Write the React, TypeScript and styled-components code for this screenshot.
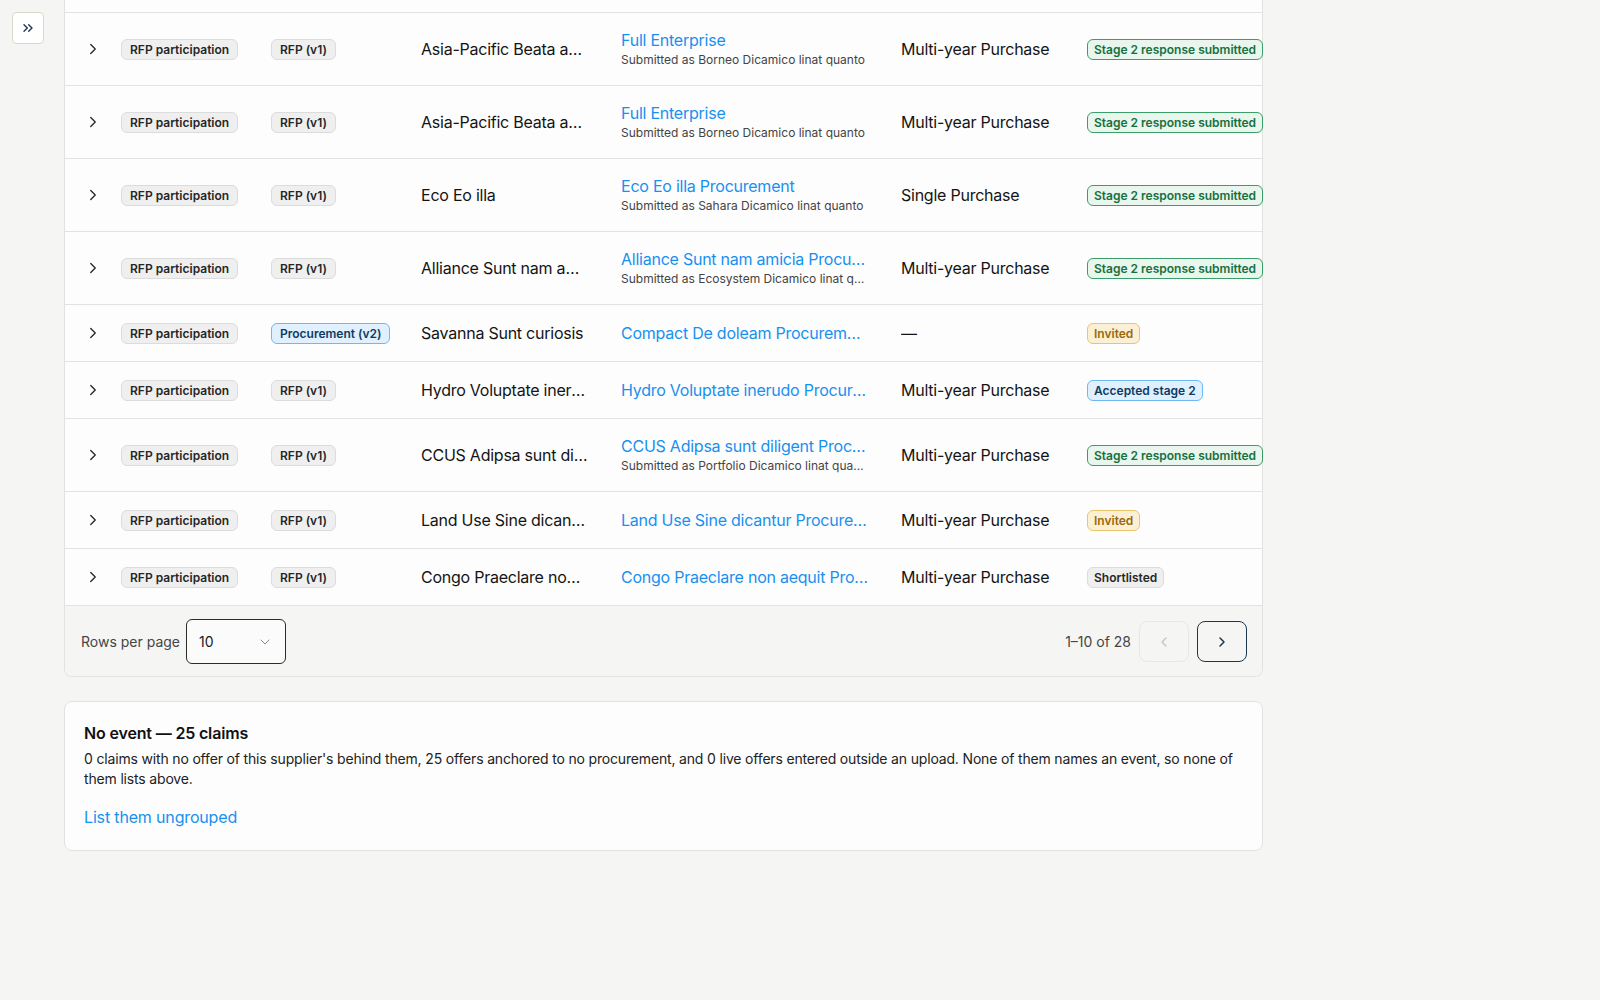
import React from "react";
import styled, { createGlobalStyle, css } from "styled-components";
import { ChevronRight, ChevronsRight, ChevronLeft, ChevronDown } from "lucide-react";

const GlobalStyle = createGlobalStyle`
  html, body { margin: 0; padding: 0; background: #f5f5f3; }
  body {
    font-family: Inter, "Noto Sans", "Liberation Sans", sans-serif;
    color: #151515;
    -webkit-font-smoothing: antialiased;
  }
  #root { min-height: 100vh; }
  * { box-sizing: border-box; }
`;

const Page = styled.div`
  display: flex;
  align-items: flex-start;
  min-height: 100vh;
`;

const Sidebar = styled.aside`
  width: 64px;
  flex: none;
  padding: 12px;
`;

const ToggleButton = styled.button`
  width: 32px;
  height: 32px;
  display: flex;
  align-items: center;
  justify-content: center;
  padding: 0;
  background: #fff;
  border: 1px solid #d9dacb;
  border-radius: 4px;
  color: #1c3550;
  cursor: pointer;
`;

const Main = styled.main`
  width: 1199px;
  flex: none;
  display: flex;
  flex-direction: column;
  gap: 24px;
`;

const TableCard = styled.section`
  background: #fdfdfd;
  border: 1px solid #e2e2e0;
  border-top: none;
  border-radius: 0 0 8px 8px;
`;

const Sliver = styled.div`
  height: 13px;
  border-bottom: 1px solid #e2e2e0;
`;

const Row = styled.div<{ $tall?: boolean }>`
  display: grid;
  grid-template-columns: 56px 150px 150px 200px 280px 186px 1fr;
  align-items: center;
  border-bottom: 1px solid #e2e2e0;
  height: ${(p) => (p.$tall ? "73px" : "57px")};
`;

const Cell = styled.div`
  min-width: 0;
  padding-right: 32px;
  font-size: 16px;
  line-height: 21px;
  letter-spacing: -0.015em;
  color: #141414;
`;

const ExpandCell = styled.div`
  display: flex;
  align-items: center;
  padding-left: 19px;
  color: #2a2a2a;
`;

const Truncate = styled.div`
  white-space: nowrap;
  overflow: hidden;
  text-overflow: ellipsis;
`;

const LinkTitle = styled(Truncate)`
  color: #1890f0;
  font-size: 16px;
  line-height: 21px;
`;

const SubText = styled(Truncate)`
  color: #444;
  font-size: 12px;
  line-height: 17px;
  letter-spacing: 0;
`;

const StatusCell = styled.div`
  white-space: nowrap;
`;

type Tone = "grey" | "blue" | "green" | "amber";

const tones: Record<Tone, ReturnType<typeof css>> = {
  grey: css`
    background: #efefef;
    border-color: #dcdcdc;
    color: #262626;
  `,
  blue: css`
    background: #e0f0fe;
    border-color: #6db9f2;
    color: #0f3b63;
  `,
  green: css`
    background: #e8f6ee;
    border-color: #3a9e68;
    color: #17703e;
  `,
  amber: css`
    background: #fcf0d4;
    border-color: #e9c56c;
    color: #98690e;
  `,
};

const Badge = styled.span<{ $tone: Tone }>`
  display: inline-block;
  font-size: 12px;
  line-height: 17px;
  font-weight: 600;
  letter-spacing: 0;
  padding: 1px 8px;
  border: 1px solid;
  border-radius: 6px;
  white-space: nowrap;
  ${(p) => tones[p.$tone]}
`;

const StatusBadge = styled(Badge)`
  padding: 1px 6px;
`;

const Footer = styled.div`
  display: flex;
  align-items: center;
  justify-content: space-between;
  padding: 13px 15px 12px 16px;
  background: #f5f5f4;
  border-radius: 0 0 8px 8px;
`;

const FooterGroup = styled.div`
  display: flex;
  align-items: center;
  gap: 8px;
  font-size: 14px;
  color: #454545;
`;

const RowsLabel = styled.span`
  margin-right: -2px;
`;

const Select = styled.div`
  width: 100px;
  height: 45px;
  display: flex;
  align-items: center;
  justify-content: space-between;
  padding: 0 12px 0 12px;
  background: #fbfbfb;
  border: 1px solid #2b2b2b;
  border-radius: 6px;
  font-size: 14px;
  color: #1a1a1a;
`;

const PageButton = styled.button<{ $active?: boolean }>`
  width: 50px;
  height: 41px;
  display: flex;
  align-items: center;
  justify-content: center;
  padding: 0;
  background: transparent;
  border-radius: 8px;
  border: 1px solid ${(p) => (p.$active ? "#1c3550" : "#e6e7e6")};
  color: ${(p) => (p.$active ? "#1c3550" : "#b9c2cb")};
  cursor: ${(p) => (p.$active ? "pointer" : "default")};
`;

const NoteCard = styled.section`
  background: #fdfdfd;
  border: 1px solid #e2e2e0;
  border-radius: 8px;
  padding: 20px 19px 23px 19px;
`;

const NoteTitle = styled.h3`
  margin: 0;
  font-size: 16px;
  line-height: 22px;
  font-weight: 600;
  letter-spacing: -0.01em;
  color: #111;
`;

const NoteText = styled.p`
  margin: 5px 0 0;
  font-size: 14px;
  line-height: 20px;
  letter-spacing: -0.012em;
  color: #222;
`;

const NoteLink = styled.a`
  display: block;
  margin-top: 18px;
  font-size: 16px;
  line-height: 20px;
  letter-spacing: -0.01em;
  color: #1890f0;
  text-decoration: none;
  cursor: pointer;
`;

type RowData = {
  version: string;
  versionTone: Tone;
  name: string;
  title: string;
  sub?: string;
  purchase: string;
  status: string;
  statusTone: Tone;
};

const rows: RowData[] = [
  {
    version: "RFP (v1)",
    versionTone: "grey",
    name: "Asia-Pacific Beata amicia",
    title: "Full Enterprise",
    sub: "Submitted as Borneo Dicamico linat quanto",
    purchase: "Multi-year Purchase",
    status: "Stage 2 response submitted",
    statusTone: "green",
  },
  {
    version: "RFP (v1)",
    versionTone: "grey",
    name: "Asia-Pacific Beata amicia",
    title: "Full Enterprise",
    sub: "Submitted as Borneo Dicamico linat quanto",
    purchase: "Multi-year Purchase",
    status: "Stage 2 response submitted",
    statusTone: "green",
  },
  {
    version: "RFP (v1)",
    versionTone: "grey",
    name: "Eco Eo illa",
    title: "Eco Eo illa Procurement",
    sub: "Submitted as Sahara Dicamico linat quanto",
    purchase: "Single Purchase",
    status: "Stage 2 response submitted",
    statusTone: "green",
  },
  {
    version: "RFP (v1)",
    versionTone: "grey",
    name: "Alliance Sunt nam amicia",
    title: "Alliance Sunt nam amicia Procurement",
    sub: "Submitted as Ecosystem Dicamico linat quanto",
    purchase: "Multi-year Purchase",
    status: "Stage 2 response submitted",
    statusTone: "green",
  },
  {
    version: "Procurement (v2)",
    versionTone: "blue",
    name: "Savanna Sunt curiosis",
    title: "Compact De doleam Procurement",
    purchase: "—",
    status: "Invited",
    statusTone: "amber",
  },
  {
    version: "RFP (v1)",
    versionTone: "grey",
    name: "Hydro Voluptate inerudo",
    title: "Hydro Voluptate inerudo Procurement",
    purchase: "Multi-year Purchase",
    status: "Accepted stage 2",
    statusTone: "blue",
  },
  {
    version: "RFP (v1)",
    versionTone: "grey",
    name: "CCUS Adipsa sunt diligent",
    title: "CCUS Adipsa sunt diligent Procurement",
    sub: "Submitted as Portfolio Dicamico linat quanto",
    purchase: "Multi-year Purchase",
    status: "Stage 2 response submitted",
    statusTone: "green",
  },
  {
    version: "RFP (v1)",
    versionTone: "grey",
    name: "Land Use Sine dicantur",
    title: "Land Use Sine dicantur Procurement",
    purchase: "Multi-year Purchase",
    status: "Invited",
    statusTone: "amber",
  },
  {
    version: "RFP (v1)",
    versionTone: "grey",
    name: "Congo Praeclare non aequit",
    title: "Congo Praeclare non aequit Procurement",
    purchase: "Multi-year Purchase",
    status: "Shortlisted",
    statusTone: "grey",
  },
];

export default function App() {
  return (
    <>
      <GlobalStyle />
      <Page>
        <Sidebar>
          <ToggleButton aria-label="Expand sidebar">
            <ChevronsRight size={16} strokeWidth={2} />
          </ToggleButton>
        </Sidebar>
        <Main>
          <TableCard>
            <Sliver />
            {rows.map((r, i) => (
              <Row key={i} $tall={!!r.sub}>
                <ExpandCell>
                  <ChevronRight size={18} strokeWidth={1.8} />
                </ExpandCell>
                <Cell>
                  <Badge $tone="grey">RFP participation</Badge>
                </Cell>
                <Cell>
                  <Badge $tone={r.versionTone}>{r.version}</Badge>
                </Cell>
                <Cell>
                  <Truncate>{r.name}</Truncate>
                </Cell>
                <Cell>
                  <LinkTitle>{r.title}</LinkTitle>
                  {r.sub && <SubText>{r.sub}</SubText>}
                </Cell>
                <Cell>
                  <Truncate>{r.purchase}</Truncate>
                </Cell>
                <StatusCell>
                  <StatusBadge $tone={r.statusTone}>{r.status}</StatusBadge>
                </StatusCell>
              </Row>
            ))}
            <Footer>
              <FooterGroup>
                <RowsLabel>Rows per page</RowsLabel>
                <Select>
                  <span>10</span>
                  <ChevronDown size={16} color="#8a8a8a" strokeWidth={1.5} />
                </Select>
              </FooterGroup>
              <FooterGroup>
                <span>1–10 of 28</span>
                <PageButton aria-label="Previous page" disabled>
                  <ChevronLeft size={16} strokeWidth={1.8} />
                </PageButton>
                <PageButton aria-label="Next page" $active>
                  <ChevronRight size={16} strokeWidth={2.2} />
                </PageButton>
              </FooterGroup>
            </Footer>
          </TableCard>
          <NoteCard>
            <NoteTitle>No event — 25 claims</NoteTitle>
            <NoteText>
              0 claims with no offer of this supplier's behind them, 25 offers anchored to no
              procurement, and 0 live offers entered outside an upload. None of them names an
              event, so none of them lists above.
            </NoteText>
            <NoteLink>List them ungrouped</NoteLink>
          </NoteCard>
        </Main>
      </Page>
    </>
  );
}
